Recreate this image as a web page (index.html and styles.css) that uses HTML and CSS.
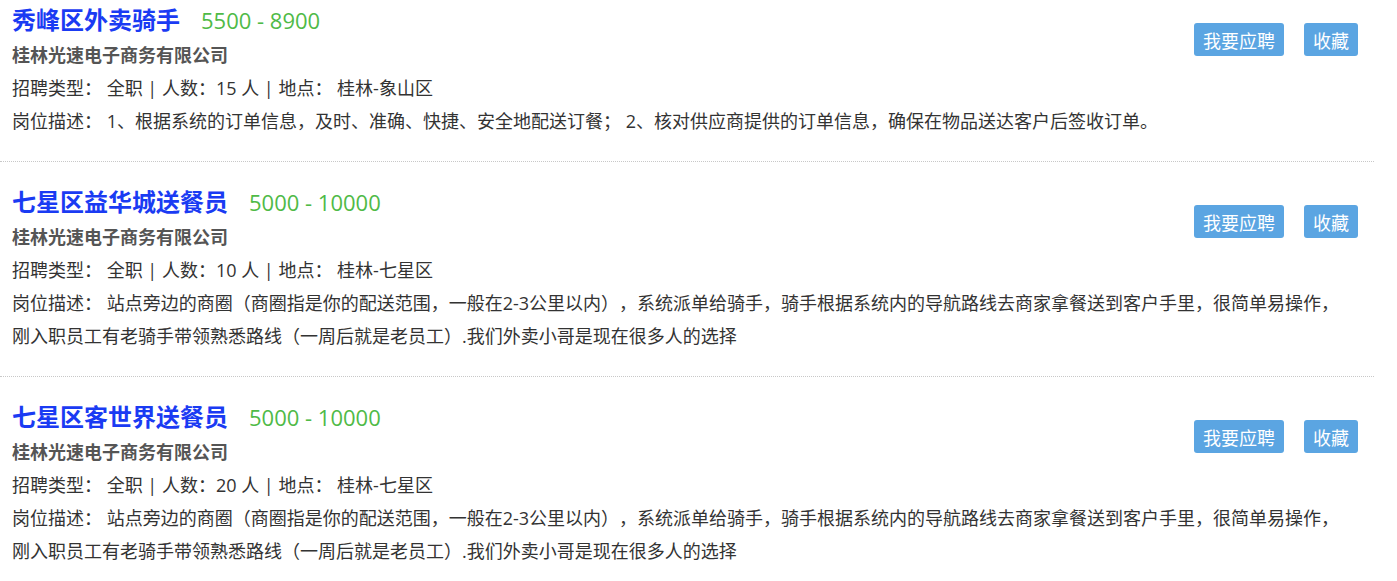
FILE: index.html
```html
<!DOCTYPE html>
<html lang="zh-CN">
<head>
  <meta charset="UTF-8" />
  <meta name="viewport" content="width=device-width, initial-scale=1.0"/>
  <title>招聘信息 - 桂林光速电子商务有限公司</title>
  <link rel="stylesheet" href="styles.css">
</head>
<body>

  <!-- Job list -->
  <div class="job-list">

    <div class="job-item">
      <div class="job-head">
        <div class="job-main">
          <h3 class="job-title">秀峰区外卖骑手<span class="salary">5500 - 8900</span></h3>
          <div class="company">桂林光速电子商务有限公司</div>
        </div>
        <div class="job-actions">
          <button class="btn">我要应聘</button>
          <button class="btn">收藏</button>
        </div>
      </div>
      <p class="job-info">招聘类型： 全职 | 人数：15 人 | 地点： 桂林-象山区</p>
      <p class="job-desc">岗位描述： 1、根据系统的订单信息，及时、准确、快捷、安全地配送订餐； 2、核对供应商提供的订单信息，确保在物品送达客户后签收订单。</p>
    </div>

    <div class="job-item">
      <div class="job-head">
        <div class="job-main">
          <h3 class="job-title">七星区益华城送餐员<span class="salary">5000 - 10000</span></h3>
          <div class="company">桂林光速电子商务有限公司</div>
        </div>
        <div class="job-actions">
          <button class="btn">我要应聘</button>
          <button class="btn">收藏</button>
        </div>
      </div>
      <p class="job-info">招聘类型： 全职 | 人数：10 人 | 地点： 桂林-七星区</p>
      <p class="job-desc">岗位描述： 站点旁边的商圈（商圈指是你的配送范围，一般在2-3公里以内），系统派单给骑手，骑手根据系统内的导航路线去商家拿餐送到客户手里，很简单易操作，刚入职员工有老骑手带领熟悉路线（一周后就是老员工）.我们外卖小哥是现在很多人的选择</p>
    </div>

    <div class="job-item">
      <div class="job-head">
        <div class="job-main">
          <h3 class="job-title">七星区客世界送餐员<span class="salary">5000 - 10000</span></h3>
          <div class="company">桂林光速电子商务有限公司</div>
        </div>
        <div class="job-actions">
          <button class="btn">我要应聘</button>
          <button class="btn">收藏</button>
        </div>
      </div>
      <p class="job-info">招聘类型： 全职 | 人数：20 人 | 地点： 桂林-七星区</p>
      <p class="job-desc">岗位描述： 站点旁边的商圈（商圈指是你的配送范围，一般在2-3公里以内），系统派单给骑手，骑手根据系统内的导航路线去商家拿餐送到客户手里，很简单易操作，刚入职员工有老骑手带领熟悉路线（一周后就是老员工）.我们外卖小哥是现在很多人的选择</p>
    </div>

  </div>

</body>
</html>
```

FILE: styles.css
```css
/* Page base */
body {
  margin: 0;
  background: #fff;
  font-family: "Open Sans", "Noto Sans CJK SC", sans-serif;
  color: #333;
  text-spacing-trim: space-all;
  overflow: hidden;
}

/* List wrapper (page is scrolled a little) */
.job-list {
  width: 1374px;
  margin-top: -1px;
}

/* One job row */
.job-item {
  padding: 19px 16px 23px 12px;
  border-bottom: 1px dotted #c8c8c8;
}

.job-item:first-child {
  padding-top: 0;
}

/* Title + buttons row */
.job-head {
  display: flex;
  justify-content: space-between;
  align-items: flex-start;
}

.job-title {
  margin: 0;
  padding-top: 2px;
  font-size: 24px;
  line-height: 38px;
  font-weight: bold;
  color: #1a3bf3;
}

.salary {
  margin-left: 21px;
  font-size: 22px;
  font-weight: normal;
  color: #4fba47;
}

.company {
  font-size: 18px;
  line-height: 33px;
  font-weight: bold;
  color: #555;
}

/* Buttons */
.job-actions {
  display: flex;
  gap: 20px;
  margin-top: 24px;
}

.btn {
  height: 33px;
  padding: 0 9px;
  font-family: inherit;
  font-size: 18px;
  color: #fff;
  background-color: #5ba5e2;
  border: none;
  border-radius: 3px;
  cursor: pointer;
}

/* Info and description text */
.job-info,
.job-desc {
  margin: 0;
  font-size: 18px;
  line-height: 33px;
}

.job-desc {
  margin-right: 10px;
}
```
